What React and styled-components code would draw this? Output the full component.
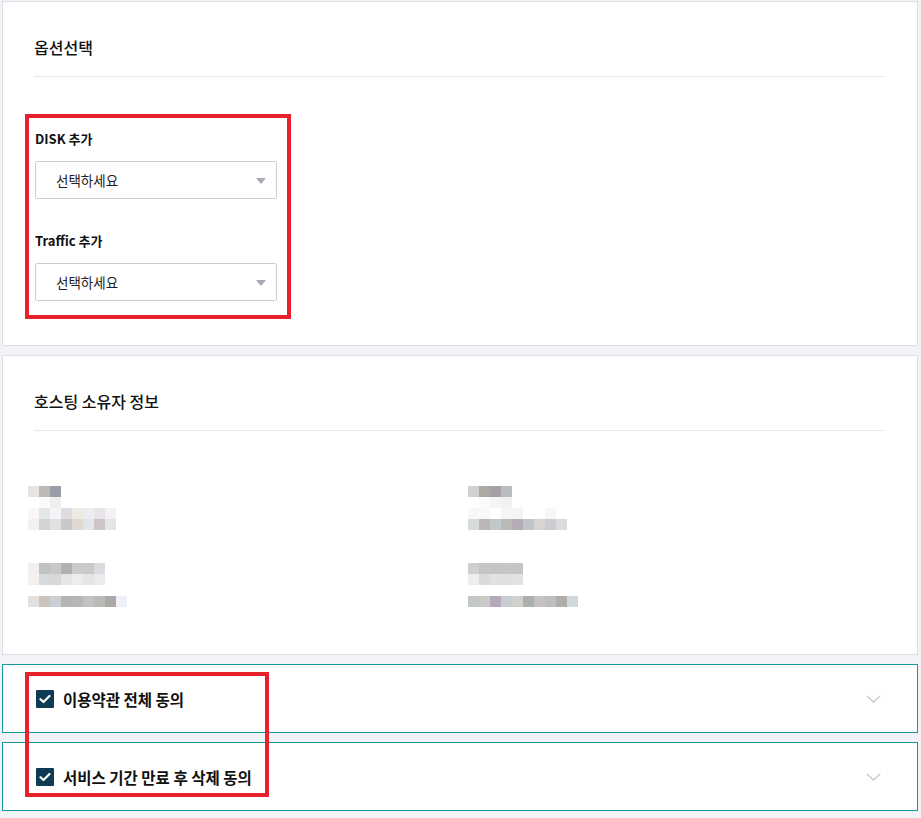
import React from "react";
import styled, { createGlobalStyle } from "styled-components";

const GlobalStyle = createGlobalStyle`
  html, body {
    margin: 0;
    padding: 0;
    background: #f2f3f7;
    font-family: "Noto Sans CJK KR", "Noto Sans", sans-serif;
    color: #222;
  }
  * {
    box-sizing: border-box;
  }
`;

const Page = styled.div`
  display: flex;
  flex-direction: column;
  gap: 9px;
  padding: 1px 3px 8px 2px;
`;

const Card = styled.section`
  background: #fff;
  border: 1px solid #dcdfe6;
  padding: 35px 32px ${(p) => p.$bottom}px 31px;
`;

const Title = styled.h2`
  margin: 0;
  font-size: 16px;
  line-height: 20px;
  font-weight: 500;
  color: #111;
`;

const Divider = styled.hr`
  margin: 19px 0 0;
  border: 0;
  border-top: 1px solid #e4e7ec;
`;

const Highlight = styled.div`
  border: 4px solid #e8222c;
`;

const OptionBox = styled(Highlight)`
  width: 266px;
  margin: 37px 0 0 -9px;
  padding: 12px 10px 14px 6px;
  display: flex;
  flex-direction: column;
`;

const FieldLabel = styled.label`
  font-size: 13px;
  line-height: 18px;
  font-weight: 700;
  color: #111;
  margin-top: ${(p) => (p.$first ? 0 : 33)}px;
`;

const Select = styled.div`
  margin-top: 13px;
  height: 38px;
  border: 1px solid #c9cdd6;
  border-radius: 2px;
  display: flex;
  align-items: center;
  justify-content: space-between;
  padding: 0 10px 0 20px;
  font-size: 13.5px;
  color: #222;
`;

const Caret = styled.span`
  width: 0;
  height: 0;
  border-left: 5px solid transparent;
  border-right: 5px solid transparent;
  border-top: 6px solid #a9aab8;
  margin-top: 2px;
`;

const InfoGrid = styled.div`
  display: grid;
  grid-template-columns: 440px 1fr;
  margin: 55px 0 0 -6px;
`;

const InfoColumn = styled.div`
  display: flex;
  flex-direction: column;
  gap: 33px;
`;

const Mosaic = styled.div`
  display: flex;
  flex-direction: column;
`;

const MosaicRow = styled.div`
  display: flex;
  height: 11px;
`;

const Cell = styled.span`
  width: 11px;
  height: 11px;
  background: ${(p) => p.$c};
`;

const Agreements = styled.div`
  position: relative;
  display: flex;
  flex-direction: column;
  gap: 9px;
`;

const Accordion = styled.div`
  height: 69px;
  background: #fff;
  border: 1px solid #18979d;
  display: flex;
  align-items: center;
  padding: 0 36px 0 33px;
`;

const Check = styled.span`
  width: 18px;
  height: 18px;
  background: #0e3a53;
  border-radius: 1px;
  display: flex;
  align-items: center;
  justify-content: center;
  flex: none;
`;

const AgreeText = styled.span`
  margin-left: 9px;
  font-size: 15.5px;
  font-weight: 700;
  color: #111;
  flex: 1;
`;

const AgreeBox = styled(Highlight)`
  position: absolute;
  left: 23px;
  top: 8px;
  width: 244px;
  height: 125px;
  pointer-events: none;
`;

const leftInfo = [
  [
    ["#e8e4e2", "#bcbab9", "#9a9ca6"],
    ["#ffffff", "#fafbf9", "#eeeff1"],
    ["#f9f8f6", "#e4e7e8", "#f4f5f7", "#dedce1", "#eeebe4", "#ecedf0", "#e8e4e9", "#f2f2f5"],
    ["#f2f1f0", "#d3d4d5", "#e0e0e3", "#c8c8c8", "#dedad0", "#e1e6ea", "#cbc5c8", "#e5e4e9"],
  ],
  [
    ["#f2f0ed", "#bfc2c1", "#c8c8c6", "#b1b1b3", "#cdcbc8", "#cbcac8", "#dadadf"],
    ["#f4f1ee", "#d6dadb", "#d8d8d8", "#e6e6e5", "#eeedeb", "#e5e5e3", "#ebebee"],
    [],
    ["#e3e1dd", "#cbc4bd", "#cacfd3", "#b4b4b4", "#b5b6b8", "#c3c0c2", "#b9b9b7", "#aba8a6", "#eef2f8"],
  ],
];

const rightInfo = [
  [
    ["#d3d2d0", "#aaa9a2", "#a69fa6", "#b9bcc1"],
    ["#ffffff", "#fbfbfb", "#f6f4f5", "#f0f1f0"],
    ["#f7f7f5", "#f9f9f9", "#ffffff", "#f7f5f4", "#f3f4f3", "#ffffff", "#ffffff", "#f6f6f6"],
    ["#d8dcd8", "#bbb7b8", "#c2c8c8", "#b9b9b5", "#b4adb5", "#c1c4cb", "#d8d4d4", "#cdcad3", "#dbdbe0"],
  ],
  [
    ["#d0cfcf", "#c6c5c6", "#c4c4c2", "#c6c6c8", "#c4c5c7"],
    ["#efeeef", "#dbdada", "#e2e1e0", "#dfe0e2", "#e1e3e2"],
    [],
    ["#c3c8c6", "#cacac6", "#b5a9bc", "#c8cdd1", "#d0d0cc", "#aab1ad", "#c4c2c4", "#c0bdc0", "#b0aeaa", "#d0d8dc"],
  ],
];

function Blurred({ rows }) {
  return (
    <Mosaic>
      {rows.map((row, i) => (
        <MosaicRow key={i}>
          {row.map((c, j) => (
            <Cell key={j} $c={c} />
          ))}
        </MosaicRow>
      ))}
    </Mosaic>
  );
}

function CheckIcon() {
  return (
    <svg width="12" height="10" viewBox="0 0 12 10">
      <path d="M1.5 5.2 L4.5 8 L10.5 2" fill="none" stroke="#fff" strokeWidth="2.2" strokeLinecap="round" strokeLinejoin="round" />
    </svg>
  );
}

function Chevron() {
  return (
    <svg width="15" height="8" viewBox="0 0 15 8">
      <polyline points="0.7,0.7 7.5,7 14.3,0.7" fill="none" stroke="#c6cad3" strokeWidth="1.4" />
    </svg>
  );
}

export default function App() {
  return (
    <>
      <GlobalStyle />
      <Page>
        <Card $bottom={26}>
          <Title>옵션선택</Title>
          <Divider />
          <OptionBox>
            <FieldLabel $first>DISK 추가</FieldLabel>
            <Select>
              선택하세요
              <Caret />
            </Select>
            <FieldLabel>Traffic 추가</FieldLabel>
            <Select>
              선택하세요
              <Caret />
            </Select>
          </OptionBox>
        </Card>

        <Card $bottom={47}>
          <Title>호스팅 소유자 정보</Title>
          <Divider />
          <InfoGrid>
            <InfoColumn>
              {leftInfo.map((rows, i) => (
                <Blurred key={i} rows={rows} />
              ))}
            </InfoColumn>
            <InfoColumn>
              {rightInfo.map((rows, i) => (
                <Blurred key={i} rows={rows} />
              ))}
            </InfoColumn>
          </InfoGrid>
        </Card>

        <Agreements>
          <Accordion>
            <Check>
              <CheckIcon />
            </Check>
            <AgreeText>이용약관 전체 동의</AgreeText>
            <Chevron />
          </Accordion>
          <Accordion>
            <Check>
              <CheckIcon />
            </Check>
            <AgreeText>서비스 기간 만료 후 삭제 동의</AgreeText>
            <Chevron />
          </Accordion>
          <AgreeBox />
        </Agreements>
      </Page>
    </>
  );
}
